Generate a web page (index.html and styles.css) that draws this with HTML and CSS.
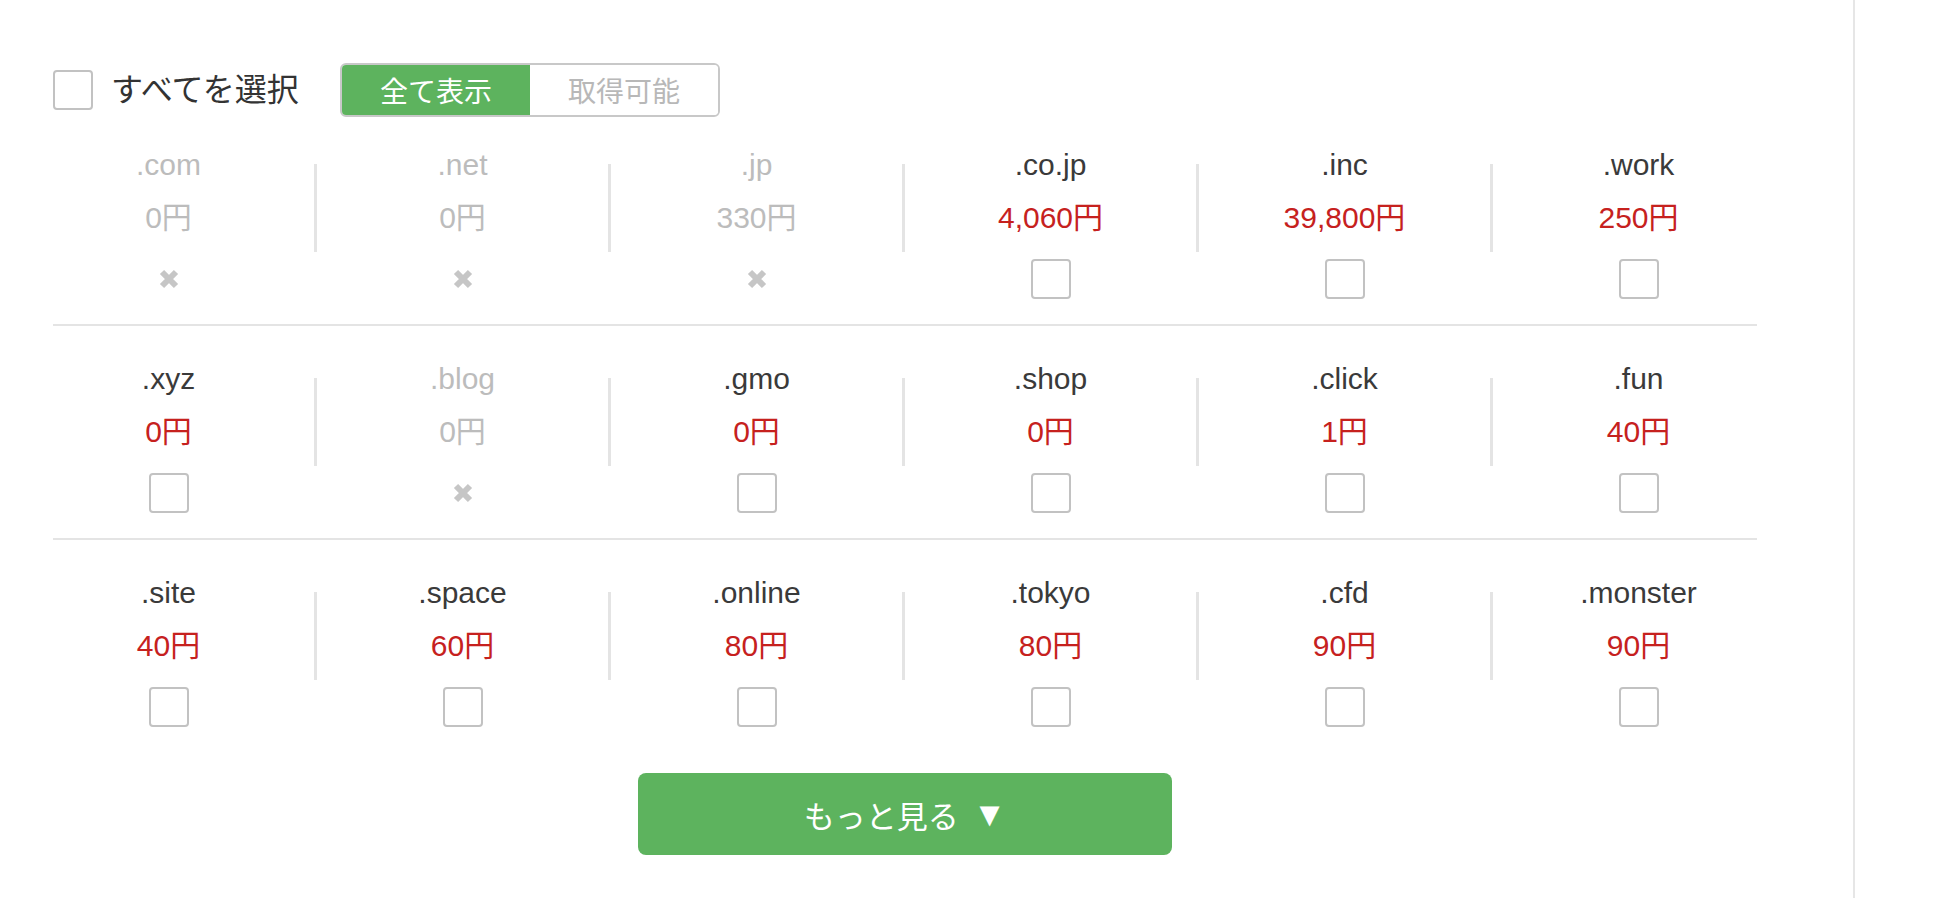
FILE: index.html
```html
<!DOCTYPE html>
<html lang="ja">
<head>
<meta charset="utf-8">
<title>ドメイン選択</title>
<link rel="stylesheet" href="styles.css">
</head>
<body>
<main class="panel">
  <div class="toolbar">
    <label class="select-all"><span class="box"></span><span class="select-all-text">すべてを選択</span></label>
    <div class="toggle"><span class="seg active">全て表示</span><span class="seg">取得可能</span></div>
  </div>

  <div class="row first">
    <div class="cells">
      <div class="cell off"><i class="div"></i><span class="name">.com</span><span class="price">0円</span><span class="mark"><svg viewBox="0 0 20 20" width="20" height="20"><path d="M3 3L17 17M17 3L3 17" stroke="#c6c6c6" stroke-width="6"/></svg></span></div>
      <div class="cell off"><i class="div"></i><span class="name">.net</span><span class="price">0円</span><span class="mark"><svg viewBox="0 0 20 20" width="20" height="20"><path d="M3 3L17 17M17 3L3 17" stroke="#c6c6c6" stroke-width="6"/></svg></span></div>
      <div class="cell off"><i class="div"></i><span class="name">.jp</span><span class="price">330円</span><span class="mark"><svg viewBox="0 0 20 20" width="20" height="20"><path d="M3 3L17 17M17 3L3 17" stroke="#c6c6c6" stroke-width="6"/></svg></span></div>
      <div class="cell"><i class="div"></i><span class="name">.co.jp</span><span class="price">4,060円</span><span class="box"></span></div>
      <div class="cell"><i class="div"></i><span class="name">.inc</span><span class="price">39,800円</span><span class="box"></span></div>
      <div class="cell"><i class="div"></i><span class="name">.work</span><span class="price">250円</span><span class="box"></span></div>
    </div>
  </div>

  <div class="row">
    <div class="cells">
      <div class="cell"><i class="div"></i><span class="name">.xyz</span><span class="price">0円</span><span class="box"></span></div>
      <div class="cell off"><i class="div"></i><span class="name">.blog</span><span class="price">0円</span><span class="mark"><svg viewBox="0 0 20 20" width="20" height="20"><path d="M3 3L17 17M17 3L3 17" stroke="#c6c6c6" stroke-width="6"/></svg></span></div>
      <div class="cell"><i class="div"></i><span class="name">.gmo</span><span class="price">0円</span><span class="box"></span></div>
      <div class="cell"><i class="div"></i><span class="name">.shop</span><span class="price">0円</span><span class="box"></span></div>
      <div class="cell"><i class="div"></i><span class="name">.click</span><span class="price">1円</span><span class="box"></span></div>
      <div class="cell"><i class="div"></i><span class="name">.fun</span><span class="price">40円</span><span class="box"></span></div>
    </div>
  </div>

  <div class="row last">
    <div class="cells">
      <div class="cell"><i class="div"></i><span class="name">.site</span><span class="price">40円</span><span class="box"></span></div>
      <div class="cell"><i class="div"></i><span class="name">.space</span><span class="price">60円</span><span class="box"></span></div>
      <div class="cell"><i class="div"></i><span class="name">.online</span><span class="price">80円</span><span class="box"></span></div>
      <div class="cell"><i class="div"></i><span class="name">.tokyo</span><span class="price">80円</span><span class="box"></span></div>
      <div class="cell"><i class="div"></i><span class="name">.cfd</span><span class="price">90円</span><span class="box"></span></div>
      <div class="cell"><i class="div"></i><span class="name">.monster</span><span class="price">90円</span><span class="box"></span></div>
    </div>
  </div>

  <div class="more-wrap"><button class="more" type="button">もっと見る<span class="arrow">▼</span></button></div>
</main>
</body>
</html>
```

FILE: styles.css
```css
html, body {
  margin: 0;
  padding: 0;
  background: #ffffff;
}

body {
  font-family: "Liberation Sans", "Noto Sans CJK JP", sans-serif;
  color: #333333;
}

.panel {
  box-sizing: border-box;
  width: 1855px;
  min-height: 898px;
  padding: 63px 96px 0 53px;
  border-right: 2px solid #e6e6e6;
}

.toolbar {
  display: flex;
  align-items: center;
  height: 54px;
}

.select-all {
  display: flex;
  align-items: center;
  gap: 18px;
  width: 287px;
}

.select-all-text {
  font-size: 32px;
  line-height: 40px;
  color: #333333;
}

.box {
  display: block;
  box-sizing: border-box;
  width: 40px;
  height: 40px;
  border: 2px solid #c2c2c2;
  border-radius: 4px;
  background: #ffffff;
}

.toggle {
  display: flex;
  box-sizing: border-box;
  width: 380px;
  height: 54px;
  border: 2px solid #c8c8c8;
  border-radius: 6px;
  overflow: hidden;
}

.seg {
  flex: 1;
  display: flex;
  align-items: center;
  justify-content: center;
  font-size: 28px;
  color: #b8b8b8;
  background: #ffffff;
}

.seg.active {
  background: #5db35e;
  color: #ffffff;
}

.row {
  border-bottom: 2px solid #e4e4e4;
}

.row.last {
  border-bottom: none;
}

.cells {
  display: grid;
  grid-template-columns: repeat(6, 294px);
  margin-left: -33px;
}

.cell {
  display: grid;
  grid-template-columns: 3px 1fr;
  grid-template-rows: auto auto auto;
  align-items: start;
  padding: 33px 0 25px;
}

.row.first .cell {
  padding-top: 28px;
}

.div {
  grid-column: 1;
  grid-row: 1 / 4;
  align-self: start;
  margin-top: 19px;
  height: 88px;
  background: #e4e4e4;
}

.cell:first-child .div {
  background: transparent;
}

.name {
  grid-column: 2;
  grid-row: 1;
  justify-self: center;
  height: 40px;
  font-size: 30px;
  line-height: 40px;
  color: #3a3a3a;
}

.price {
  grid-column: 2;
  grid-row: 2;
  justify-self: center;
  height: 40px;
  margin-top: 13px;
  font-size: 30px;
  line-height: 40px;
  color: #c6211e;
}

.cell .box,
.cell .mark {
  grid-column: 2;
  grid-row: 3;
  justify-self: center;
  margin-top: 21px;
}

.mark {
  display: flex;
  align-items: center;
  justify-content: center;
  width: 40px;
  height: 40px;
}

.mark svg {
  display: block;
}

.cell.off .name,
.cell.off .price {
  color: #bcbcbc;
}

.more-wrap {
  display: flex;
  justify-content: center;
  margin-top: 21px;
}

.more {
  display: flex;
  align-items: center;
  justify-content: center;
  width: 534px;
  height: 82px;
  border: none;
  border-radius: 8px;
  background: #5db35e;
  color: #ffffff;
  font-family: "Liberation Sans", "Noto Sans CJK JP", sans-serif;
  font-size: 31px;
  cursor: pointer;
}

.arrow {
  margin-left: 14px;
  font-size: 34px;
  line-height: 1;
}
```
